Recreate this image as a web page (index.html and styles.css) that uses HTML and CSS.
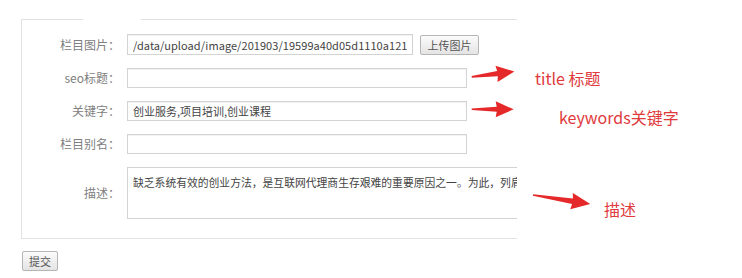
FILE: index.html
```html
<!DOCTYPE html>
<html lang="zh-CN">
<head>
<meta charset="utf-8">
<title>栏目设置</title>
<link rel="stylesheet" href="styles.css">
</head>
<body>
<div class="page">
  <div class="clip">
    <fieldset class="box">
      <legend></legend>
      <div class="row">
        <label class="lbl">栏目图片：</label>
        <div class="field">
          <input class="txt txt-img" type="text" value="/data/upload/image/201903/19599a40d05d1110a121">
          <button class="btn btn-up" type="button">上传图片</button>
        </div>
      </div>
      <div class="row">
        <label class="lbl">seo标题：</label>
        <div class="field"><input class="txt" type="text" value=""></div>
      </div>
      <div class="row">
        <label class="lbl">关键字：</label>
        <div class="field"><input class="txt" type="text" value="创业服务,项目培训,创业课程"></div>
      </div>
      <div class="row">
        <label class="lbl">栏目别名：</label>
        <div class="field"><input class="txt" type="text" value=""></div>
      </div>
      <div class="row row-area">
        <label class="lbl">描述：</label>
        <div class="field"><textarea class="area">缺乏系统有效的创业方法，是互联网代理商生存艰难的重要原因之一。为此，列肩系统培训课程</textarea></div>
      </div>
    </fieldset>
  </div>
  <button class="btn btn-submit" type="submit">提交</button>

  <svg class="arrows" width="742" height="278" viewBox="0 0 742 278">
    <g fill="#e5292a">
      <polygon transform="translate(471.7 76.9) rotate(-7.2)" points="0,-0.8 26,-2.6 25,-8.2 43,0 25,8.2 26,2.6 0,0.8"/>
      <polygon transform="translate(471.7 109.3)" points="0,-0.8 25,-2.5 24,-8 42,0 24,8 25,2.5 0,0.8"/>
      <polygon transform="translate(533 195) rotate(9)" points="0,-0.8 40,-2.8 39,-8.2 58,0 39,8.2 40,2.8 0,0.8"/>
    </g>
  </svg>
  <div class="note note-title">title 标题</div>
  <div class="note note-kw">keywords关键字</div>
  <div class="note note-desc">描述</div>
</div>
</body>
</html>
```
FILE: styles.css
```css
html, body {
  margin: 0;
  padding: 0;
  background: #fff;
}
body {
  font-family: "Noto Sans CJK SC", "Noto Sans", sans-serif;
  font-size: 12px;
  color: #333;
}
.page {
  position: relative;
  width: 742px;
  height: 278px;
  padding: 19px 0 0 21px;
  box-sizing: border-box;
}
.clip {
  width: 496px;
  overflow: hidden;
}
.box {
  margin: 0;
  width: 640px;
  padding: 14px 0 19px 0;
  border: 1px solid #e2e2e2;
  display: flex;
  flex-direction: column;
  gap: 13px;
  box-sizing: border-box;
  min-width: 0;
}
.box legend {
  margin-left: 61px;
  width: 58px;
  height: 0;
  padding: 0;
  font-size: 0;
}
.row {
  display: flex;
  align-items: center;
  height: 20px;
}
.row:first-of-type {
  height: 21px;
}
.row-area {
  height: 52px;
}
.lbl {
  width: 98px;
  flex: none;
  text-align: right;
  color: #808080;
  font-size: 12px;
  line-height: 20px;
  margin-right: 7px;
}
.field {
  display: flex;
  align-items: center;
  gap: 7px;
}
.txt {
  box-sizing: border-box;
  width: 340px;
  height: 20px;
  margin: 0;
  padding: 0 5px;
  border: 1px solid #d3d3d3;
  box-shadow: inset 0 1px 1px rgba(0,0,0,0.06);
  font-family: "Noto Sans CJK SC", "Noto Sans", sans-serif;
  font-size: 11px;
  color: #444;
  outline: none;
  background: #fff;
}
.txt-img {
  width: 286px;
  height: 21px;
  letter-spacing: 0.05px;
}
.btn {
  box-sizing: border-box;
  margin: 0;
  padding: 0;
  height: 20px;
  border: 1px solid #b5b5b5;
  border-radius: 2px;
  background: linear-gradient(#fbfbfb, #e4e4e4);
  font-family: "Noto Sans CJK SC", "Noto Sans", sans-serif;
  font-size: 11px;
  line-height: 18px;
  color: #555;
}
.btn-up {
  width: 59px;
  margin-top: 1px;
}
.area {
  box-sizing: border-box;
  width: 720px;
  height: 52px;
  margin: 0;
  padding: 6px 5px;
  border: 1px solid #d3d3d3;
  resize: none;
  font-family: "Noto Sans CJK SC", "Noto Sans", sans-serif;
  font-size: 10.8px;
  line-height: 16px;
  color: #444;
  outline: none;
  overflow: hidden;
}
.btn-submit {
  display: block;
  width: 36px;
  margin: 12px 0 0 1px;
}
.arrows {
  position: absolute;
  left: 0;
  top: 0;
  pointer-events: none;
}
.note {
  position: absolute;
  font-family: "Noto Sans CJK SC", "Noto Sans", sans-serif;
  font-size: 16px;
  line-height: 22px;
  color: #e03a3c;
  white-space: nowrap;
}
.note-title { left: 535px; top: 67px; }
.note-kw { left: 559px; top: 106px; }
.note-desc { left: 604px; top: 198px; }
```
